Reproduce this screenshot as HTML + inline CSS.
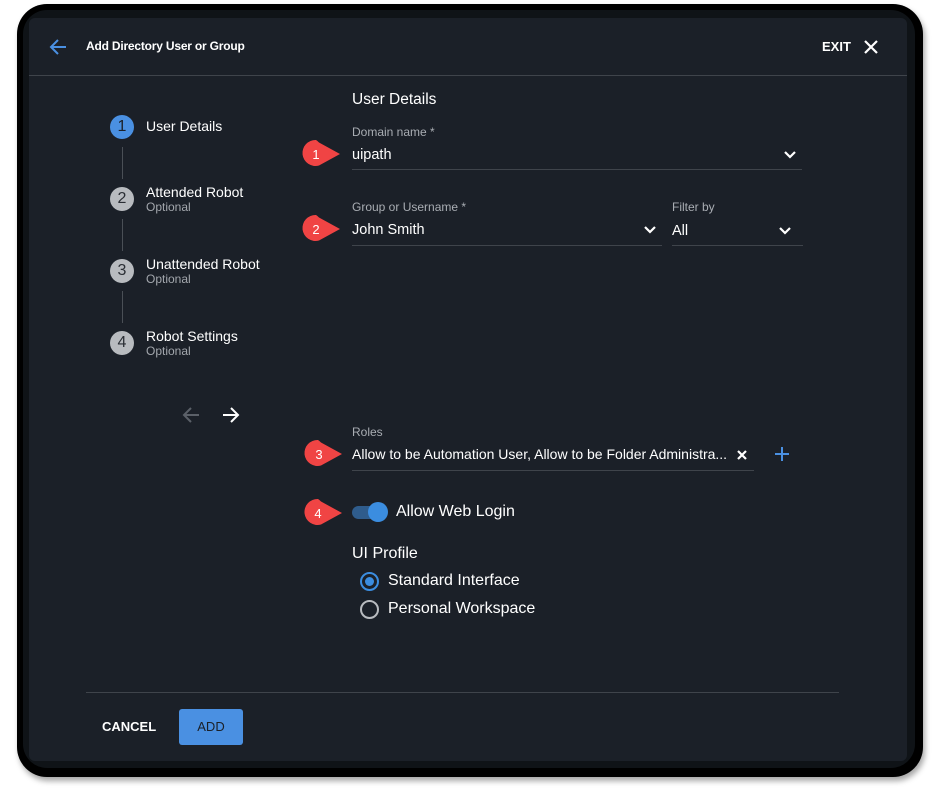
<!DOCTYPE html>
<html><head><meta charset="utf-8"><style>
*{margin:0;padding:0;box-sizing:border-box}
body{width:937px;height:792px;background:#fff;font-family:"Liberation Sans",Arial,sans-serif;position:relative;overflow:hidden}
.a{position:absolute}
.outer{left:17px;top:4px;width:906px;height:773px;background:#000;border-radius:30px;box-shadow:2px 4px 6px rgba(0,0,0,.35)}
.mid{left:23px;top:10px;width:892px;height:758px;background:#0f1317;border-radius:24px}
.panel{left:29px;top:18px;width:878px;height:743px;background:#1b2028;border-radius:6px}
.t{color:#fff;white-space:nowrap}
.lbl{color:#a9adb3;font-size:12px}
.val{color:#fff;font-size:14.5px}
.ln{height:1px;background:#3f444b}
.step{width:24px;height:24px;border-radius:50%;background:#b8bbbf;color:#2a2e34;font-size:16px;text-align:center;line-height:24px}
.vl{width:1px;background:#4a4f56;left:122px}
.opt{color:#a3a7ad;font-size:12px}
</style></head><body>
<div class="a outer"></div>
<div class="a mid"></div>
<div class="a panel"></div>

<svg class="a" style="left:48px;top:37px" width="20" height="20" viewBox="0 0 20 20"><path d="M18 10H3M10 3L3 10l7 7" stroke="#4a90e2" stroke-width="2" fill="none"/></svg>
<div class="a t" style="left:86px;top:39px;font-size:12px;font-weight:bold;letter-spacing:-0.2px">Add Directory User or Group</div>
<div class="a t" style="left:822px;top:39px;font-size:13px;font-weight:bold">EXIT</div>
<svg class="a" style="left:863px;top:39px" width="16" height="16" viewBox="0 0 16 16"><path d="M2 2l12 12M14 2L2 14" stroke="#fff" stroke-width="2.2"/></svg>
<div class="a ln" style="left:29px;top:75px;width:878px"></div>

<div class="a step" style="left:110px;top:115px;background:#4a90e2;color:#1b2028">1</div>
<div class="a t" style="left:146px;top:118px;font-size:14px">User Details</div>
<div class="a vl" style="top:147px;height:32px"></div>
<div class="a step" style="left:110px;top:187px">2</div>
<div class="a t" style="left:146px;top:184px;font-size:14px">Attended Robot</div>
<div class="a opt" style="left:146px;top:200px">Optional</div>
<div class="a vl" style="top:219px;height:32px"></div>
<div class="a step" style="left:110px;top:259px">3</div>
<div class="a t" style="left:146px;top:256px;font-size:14px">Unattended Robot</div>
<div class="a opt" style="left:146px;top:272px">Optional</div>
<div class="a vl" style="top:291px;height:32px"></div>
<div class="a step" style="left:110px;top:331px">4</div>
<div class="a t" style="left:146px;top:328px;font-size:14px">Robot Settings</div>
<div class="a opt" style="left:146px;top:344px">Optional</div>
<svg class="a" style="left:181px;top:405px" width="20" height="20" viewBox="0 0 20 20"><path d="M18 10H3M10 3L3 10l7 7" stroke="#5b6068" stroke-width="2" fill="none"/></svg>
<svg class="a" style="left:221px;top:405px" width="20" height="20" viewBox="0 0 20 20"><path d="M2 10h15M10 3l7 7-7 7" stroke="#fff" stroke-width="2" fill="none"/></svg>

<div class="a t" style="left:352px;top:91px;font-size:15.5px">User Details</div>

<div class="a lbl" style="left:352px;top:125px">Domain name *</div>
<div class="a val" style="left:352px;top:147px">uipath</div>
<svg class="a" style="left:783px;top:150px" width="14" height="10" viewBox="0 0 14 10"><path d="M2 2l5 5 5-5" stroke="#fff" stroke-width="2.2" fill="none"/></svg>
<div class="a ln" style="left:352px;top:169px;width:450px"></div>

<div class="a lbl" style="left:352px;top:200px">Group or Username *</div>
<div class="a val" style="left:352px;top:222px">John Smith</div>
<svg class="a" style="left:643px;top:225px" width="14" height="10" viewBox="0 0 14 10"><path d="M2 2l5 5 5-5" stroke="#fff" stroke-width="2.2" fill="none"/></svg>
<div class="a ln" style="left:352px;top:245px;width:310px"></div>
<div class="a lbl" style="left:672px;top:200px">Filter by</div>
<div class="a val" style="left:672px;top:223px">All</div>
<svg class="a" style="left:778px;top:226px" width="14" height="10" viewBox="0 0 14 10"><path d="M2 2l5 5 5-5" stroke="#fff" stroke-width="2.2" fill="none"/></svg>
<div class="a ln" style="left:672px;top:245px;width:131px"></div>

<div class="a lbl" style="left:352px;top:425px">Roles</div>
<div class="a val" style="left:352px;top:446px;font-size:14px">Allow to be Automation User, Allow to be Folder Administra...</div>
<svg class="a" style="left:736px;top:449px" width="12" height="12" viewBox="0 0 12 12"><path d="M2 2l8 8M10 2L2 10" stroke="#fff" stroke-width="2.2"/></svg>
<div class="a ln" style="left:352px;top:470px;width:402px"></div>
<svg class="a" style="left:774px;top:446px" width="16" height="16" viewBox="0 0 16 16"><path d="M8 1v14M1 8h14" stroke="#4a90e2" stroke-width="2"/></svg>

<div class="a" style="left:352px;top:506px;width:34px;height:13px;border-radius:7px;background:#2f5c8c"></div>
<div class="a" style="left:368px;top:502px;width:20px;height:20px;border-radius:50%;background:#3b8de0"></div>
<div class="a t" style="left:396px;top:503px;font-size:16px">Allow Web Login</div>

<div class="a t" style="left:352px;top:545px;font-size:16px">UI Profile</div>
<div class="a" style="left:360px;top:572px;width:19px;height:19px;border-radius:50%;border:2px solid #3b8de0"></div>
<div class="a" style="left:365px;top:577px;width:9px;height:9px;border-radius:50%;background:#3b8de0"></div>
<div class="a t" style="left:388px;top:572px;font-size:16px">Standard Interface</div>
<div class="a" style="left:360px;top:600px;width:19px;height:19px;border-radius:50%;border:2px solid #b8bbbf"></div>
<div class="a t" style="left:388px;top:600px;font-size:16px">Personal Workspace</div>

<svg class="a" style="left:296px;top:135px" width="50" height="500" viewBox="0 0 50 500">
<g fill="#f04444">
<path d="M20 5a13 13 0 1 0 3 25.5L44 19 23 7.5A13 13 0 0 0 20 5z"/>
<path d="M20 80a13 13 0 1 0 3 25.5L44 94 23 82.5A13 13 0 0 0 20 80z"/>
<path d="M22 305a13 13 0 1 0 3 25.5L46 319 25 307.5A13 13 0 0 0 22 305z"/>
<path d="M22 364a13 13 0 1 0 3 25.5L46 378 25 366.5A13 13 0 0 0 22 364z"/>
</g>
<g fill="#fff" font-family="Liberation Sans,sans-serif" font-size="13" text-anchor="middle">
<text x="20" y="24">1</text><text x="20" y="99">2</text><text x="23" y="324">3</text><text x="22" y="383">4</text>
</g></svg>

<div class="a ln" style="left:86px;top:692px;width:753px"></div>
<div class="a t" style="left:102px;top:719px;font-size:13px;font-weight:bold">CANCEL</div>
<div class="a" style="left:179px;top:709px;width:64px;height:36px;background:#4a90e2;border-radius:3px;color:#1b2028;font-size:13px;text-align:center;line-height:36px">ADD</div>
</body></html>
